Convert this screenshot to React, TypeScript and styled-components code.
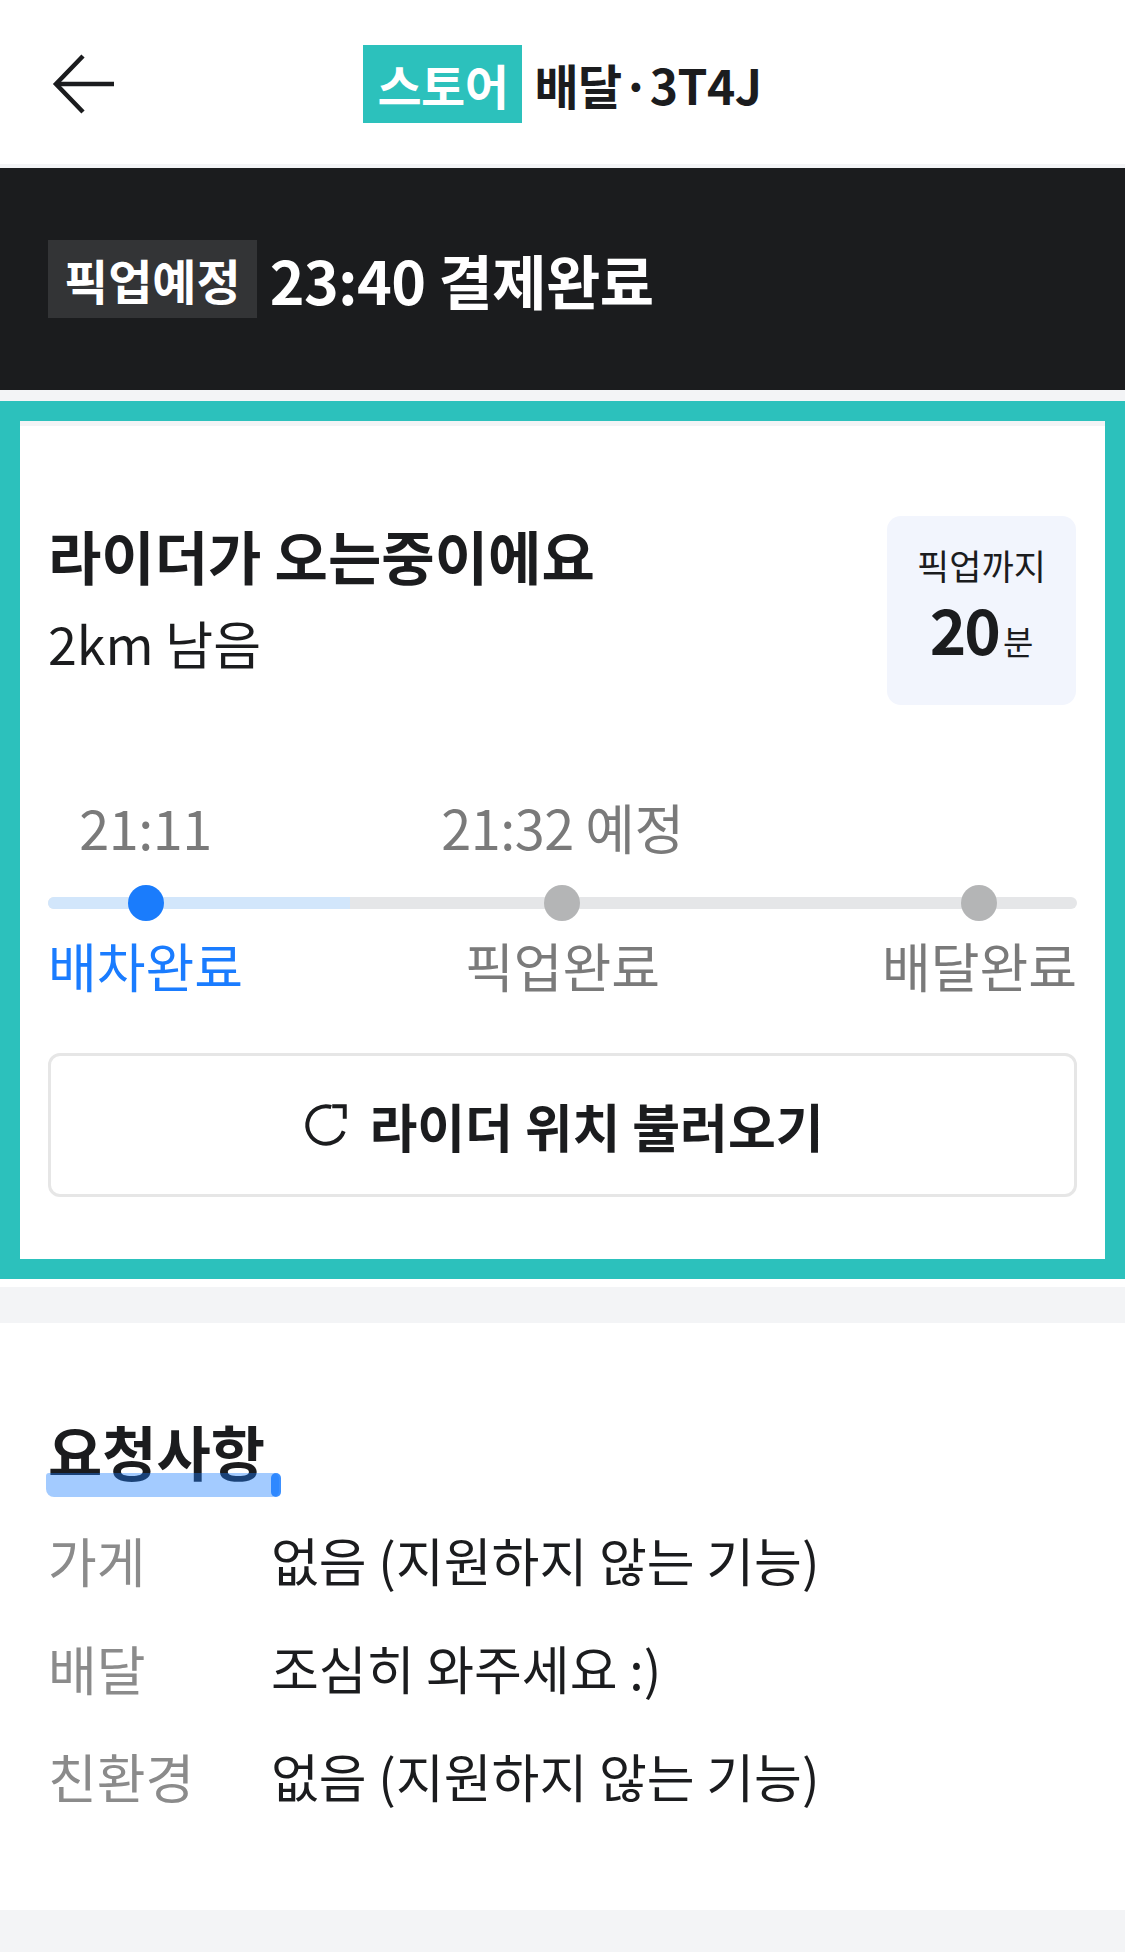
import React from 'react';
import styled, { createGlobalStyle } from 'styled-components';

const GlobalStyle = createGlobalStyle`
  * {
    box-sizing: border-box;
  }

  body {
    margin: 0;
    background: #f3f4f6;
    font-family: "Noto Sans CJK KR", "Noto Sans", sans-serif;
    color: #1b1c1e;
  }
`;

const Page = styled.div`
  width: 1125px;
  min-height: 1952px;
  background: #f3f4f6;
  display: flex;
  flex-direction: column;
`;

const Header = styled.header`
  height: 164px;
  background: #ffffff;
  display: grid;
  grid-template-columns: 1fr auto 1fr;
  align-items: center;
  margin-bottom: 4px;
  padding-top: 4px;
`;

const BackButton = styled.button`
  justify-self: start;
  margin-left: 50px;
  width: 68px;
  height: 64px;
  padding: 0;
  border: none;
  background: none;
  display: flex;
  align-items: center;
  justify-content: center;
  color: #1b1c1e;
`;

const HeaderTitle = styled.h1`
  margin: 0;
  display: flex;
  align-items: center;
  gap: 12px;
  font-size: 48px;
  font-weight: 700;
  line-height: 1;
  color: #1b1c1e;
  letter-spacing: -0.5px;
`;

const StoreBadge = styled.span`
  height: 78px;
  padding: 0 14px;
  display: flex;
  align-items: center;
  background: #2cc1bc;
  color: #ffffff;
`;

const StatusBand = styled.section`
  height: 222px;
  background: #1b1c1e;
  display: flex;
  align-items: center;
  padding-left: 48px;
  gap: 13px;
  margin-bottom: 11px;
`;

const StatusBadge = styled.span`
  height: 78px;
  padding: 0 16px;
  display: flex;
  align-items: center;
  background: #333436;
  color: #ffffff;
  font-size: 48px;
  font-weight: 700;
`;

const StatusText = styled.span`
  color: #ffffff;
  font-size: 59px;
  font-weight: 700;
  letter-spacing: -0.5px;
`;

const Highlight = styled.div`
  border: 20px solid #2cc1bc;
  background: #f3f4f6;
  padding-top: 5px;
`;

const Card = styled.section`
  background: #ffffff;
  padding: 90px 28px 62px;
`;

const CardTail = styled.div`
  height: 8px;
  background: #ffffff;
  margin-bottom: 36px;
`;

const TopRow = styled.div`
  display: flex;
  justify-content: space-between;
  align-items: flex-start;
`;

const RiderInfo = styled.div`
  padding-top: 4px;
  display: flex;
  flex-direction: column;
  gap: 22px;
`;

const RiderTitle = styled.h2`
  margin: 0;
  font-size: 58px;
  font-weight: 700;
  line-height: 70px;
`;

const Distance = styled.p`
  margin: 0;
  font-size: 52px;
  font-weight: 400;
  line-height: 62px;
`;

const EtaBox = styled.div`
  width: 189px;
  height: 189px;
  margin-right: 1px;
  border-radius: 14px;
  background: #f2f5fd;
  display: flex;
  flex-direction: column;
  align-items: center;
  padding-top: 28px;
  gap: 6px;
`;

const EtaLabel = styled.span`
  font-size: 35px;
  line-height: 42px;
  color: #1b1c1e;
`;

const EtaValue = styled.span`
  display: flex;
  align-items: baseline;
  font-size: 62px;
  font-weight: 700;
  line-height: 72px;
  letter-spacing: -2px;

  small {
    font-size: 33px;
    font-weight: 400;
    letter-spacing: 0;
    margin-left: 4px;
  }
`;

const Timeline = styled.div`
  position: relative;
  margin-top: 93px;
`;

const Track = styled.div`
  position: absolute;
  left: 0;
  right: 0;
  top: 99px;
  height: 12px;
  border-radius: 6px;
  background: #e5e6e8;
  overflow: hidden;
`;

const TrackFill = styled.div<{ $width: number }>`
  width: ${(p) => p.$width}px;
  height: 100%;
  background: #d2e6fb;
`;

const Steps = styled.div`
  position: relative;
  display: flex;
  justify-content: space-between;
`;

const Step = styled.div`
  display: flex;
  flex-direction: column;
  align-items: center;
`;

const StepTime = styled.span`
  height: 58px;
  font-size: 54px;
  line-height: 58px;
  color: #7a7a7a;
  white-space: nowrap;
  letter-spacing: -0.5px;
`;

const Dot = styled.span<{ $active?: boolean }>`
  width: 36px;
  height: 36px;
  margin-top: 29px;
  border-radius: 50%;
  background: ${(p) => (p.$active ? '#1a7cfc' : '#b4b5b6')};
`;

const StepLabel = styled.span<{ $active?: boolean }>`
  margin-top: 15px;
  font-size: 53px;
  line-height: 58px;
  color: ${(p) => (p.$active ? '#1a7cff' : '#7a7a7a')};
  white-space: nowrap;
`;

const RefreshButton = styled.button`
  width: 100%;
  height: 144px;
  margin-top: 59px;
  border: 3px solid #e6e6e6;
  border-radius: 12px;
  background: #ffffff;
  display: flex;
  align-items: center;
  justify-content: center;
  gap: 18px;
  font-family: inherit;
  font-size: 52px;
  font-weight: 700;
  color: #1b1c1e;
`;

const RequestSection = styled.section`
  background: #ffffff;
  padding: 93px 48px 103px;
`;

const SectionTitle = styled.h3`
  position: relative;
  display: inline-block;
  margin: 0 0 43px;
  font-size: 59px;
  font-weight: 700;
  line-height: 70px;

  &::after {
    content: '';
    position: absolute;
    left: -2px;
    right: -14px;
    top: 57px;
    height: 24px;
    border-radius: 3px 6px 6px 8px;
    background: rgba(26, 124, 255, 0.4);
  }

  &::before {
    content: '';
    position: absolute;
    right: -16px;
    top: 57px;
    width: 10px;
    height: 24px;
    border-radius: 5px;
    background: rgba(26, 124, 255, 0.85);
  }
`;

const RequestList = styled.dl`
  margin: 0;
  display: grid;
  grid-template-columns: 223px 1fr;
  row-gap: 46px;
`;

const RequestLabel = styled.dt`
  font-size: 53px;
  line-height: 62px;
  color: #8b8b8b;
`;

const RequestValue = styled.dd`
  margin: 0;
  font-size: 52px;
  line-height: 62px;
  color: #1b1c1e;
`;

const BackIcon = () => (
  <svg width="64" height="62" viewBox="0 0 64 62" fill="none">
    <path d="M62 31H5" stroke="currentColor" strokeWidth="4.5" />
    <path d="M31 3L4 31L31 59" stroke="currentColor" strokeWidth="4.5" strokeLinejoin="miter" />
  </svg>
);

const RefreshIcon = () => (
  <svg width="50" height="50" viewBox="0 0 24 24" fill="none" stroke="#1b1c1e" strokeWidth="1.9">
    <path d="M20.5 15A9 9 0 1 1 14.5 3.35" />
    <path d="M15 3H21V9" strokeLinejoin="miter" />
  </svg>
);

const steps = [
  { time: '21:11', label: '배차완료', active: true },
  { time: '21:32 예정', label: '픽업완료', active: false },
  { time: '', label: '배달완료', active: false },
];

const requests = [
  { label: '가게', value: '없음 (지원하지 않는 기능)' },
  { label: '배달', value: '조심히 와주세요 :)' },
  { label: '친환경', value: '없음 (지원하지 않는 기능)' },
];

const App: React.FC = () => {
  return (
    <Page>
      <GlobalStyle />
      <Header>
        <BackButton aria-label="뒤로">
          <BackIcon />
        </BackButton>
        <HeaderTitle>
          <StoreBadge>스토어</StoreBadge>
          배달·3T4J
        </HeaderTitle>
        <div />
      </Header>

      <StatusBand>
        <StatusBadge>픽업예정</StatusBadge>
        <StatusText>23:40 결제완료</StatusText>
      </StatusBand>

      <Highlight>
        <Card>
          <TopRow>
            <RiderInfo>
              <RiderTitle>라이더가 오는중이에요</RiderTitle>
              <Distance>2km 남음</Distance>
            </RiderInfo>
            <EtaBox>
              <EtaLabel>픽업까지</EtaLabel>
              <EtaValue>
                20<small>분</small>
              </EtaValue>
            </EtaBox>
          </TopRow>

          <Timeline>
            <Track>
              <TrackFill $width={302} />
            </Track>
            <Steps>
              {steps.map((step) => (
                <Step key={step.label}>
                  <StepTime>{step.time}</StepTime>
                  <Dot $active={step.active} />
                  <StepLabel $active={step.active}>{step.label}</StepLabel>
                </Step>
              ))}
            </Steps>
          </Timeline>

          <RefreshButton>
            <RefreshIcon />
            라이더 위치 불러오기
          </RefreshButton>
        </Card>
      </Highlight>
      <CardTail />

      <RequestSection>
        <SectionTitle>요청사항</SectionTitle>
        <RequestList>
          {requests.map((r) => (
            <React.Fragment key={r.label}>
              <RequestLabel>{r.label}</RequestLabel>
              <RequestValue>{r.value}</RequestValue>
            </React.Fragment>
          ))}
        </RequestList>
      </RequestSection>
    </Page>
  );
};

export default App;
